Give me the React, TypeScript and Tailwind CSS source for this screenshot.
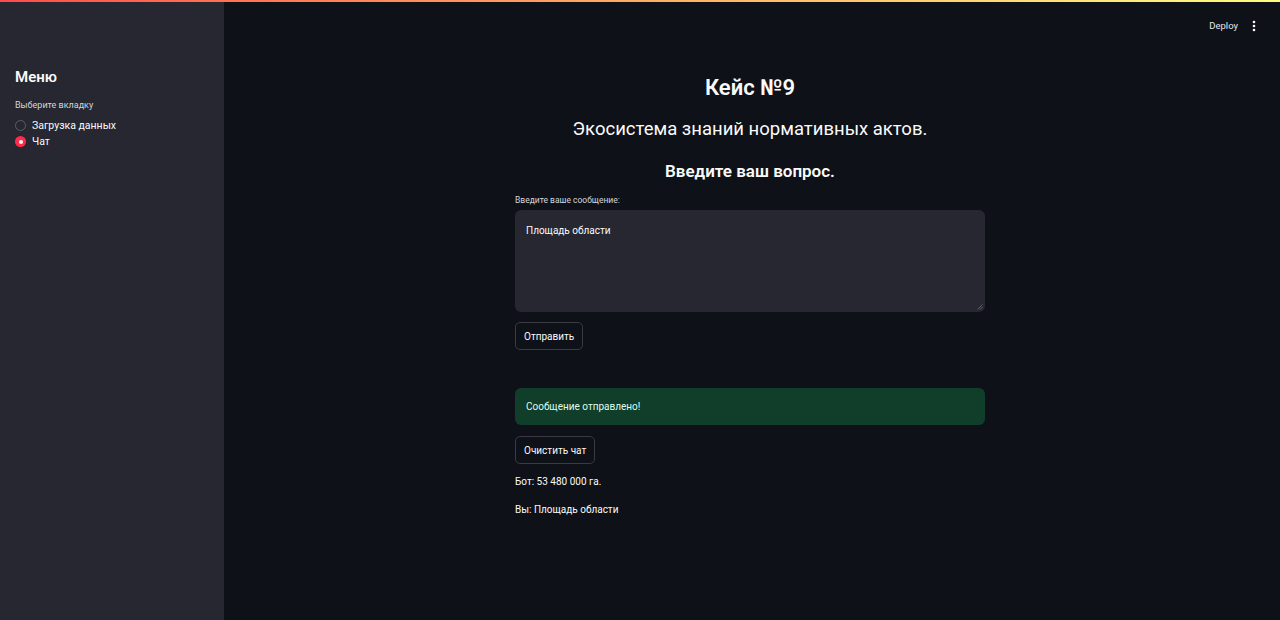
import React from "react";

const font = { fontFamily: 'Roboto, "Noto Sans", sans-serif' };

function Radio({ label, checked }: { label: string; checked?: boolean }) {
  return (
    <div className="flex items-center gap-[6px] h-[16px]">
      {checked ? (
        <span className="w-[11px] h-[11px] rounded-full bg-[#ff2b4b] flex items-center justify-center">
          <span className="w-[4px] h-[4px] rounded-full bg-white" />
        </span>
      ) : (
        <span className="w-[11px] h-[11px] rounded-full border border-[#5c5e66]" />
      )}
      <span className="text-[10.5px] text-[#fafafa]">{label}</span>
    </div>
  );
}

function Button({ children }: { children: React.ReactNode }) {
  return (
    <button className="h-[28px] px-[8px] rounded-[5px] border border-[#3a3b42] bg-[#0e1117] text-[10px] text-[#fafafa]">
      {children}
    </button>
  );
}

export default function App() {
  return (
    <div className="relative w-[1280px] h-[620px] bg-[#0e1117] text-[#fafafa] overflow-hidden flex" style={font}>
      <div className="absolute top-0 left-0 right-0 h-[2px] bg-gradient-to-r from-[#ff4b4b] to-[#fffd80]" />

      <aside className="w-[224px] h-full bg-[#262730] px-[15px] pt-[67px] shrink-0">
        <h2 className="text-[15px] font-semibold leading-[20px]">Меню</h2>
        <div className="mt-[12px] text-[9px] text-[#d5d6da]">Выберите вкладку</div>
        <div className="mt-[5px] flex flex-col">
          <Radio label="Загрузка данных" />
          <Radio label="Чат" checked />
        </div>
      </aside>

      <main className="flex-1 relative pr-[4px]">
        <div className="absolute top-[19px] right-[24px] flex items-center gap-[14px]">
          <span className="text-[9.5px] text-[#e6e6e9]">Deploy</span>
          <svg width="4" height="12" viewBox="0 0 4 12" fill="#fafafa">
            <circle cx="2" cy="2" r="1.3" />
            <circle cx="2" cy="6" r="1.3" />
            <circle cx="2" cy="10" r="1.3" />
          </svg>
        </div>

        <div className="w-[470px] mx-auto pt-[73px]">
          <h1 className="text-center text-[22px] font-semibold leading-[30px]">Кейс №9</h1>
          <h2 className="text-center text-[18.5px] mt-[13px] leading-[26px]">Экосистема знаний нормативных актов.</h2>
          <h3 className="text-center text-[17px] font-semibold mt-[17px] leading-[24px]">Введите ваш вопрос.</h3>

          <div className="mt-[11px] text-[8.5px] text-[#d5d6da] leading-[12px]">Введите ваше сообщение:</div>
          <div className="mt-[4px] h-[102px] rounded-[6px] bg-[#262730] px-[11px] pt-[13px] text-[10px] relative">
            Площадь области
            <svg className="absolute right-[2px] bottom-[2px]" width="6" height="6" viewBox="0 0 6 6" stroke="#6b6d75" strokeWidth="0.8">
              <line x1="0.5" y1="5.5" x2="5.5" y2="0.5" />
              <line x1="3" y1="5.5" x2="5.5" y2="3" />
            </svg>
          </div>

          <div className="mt-[10px]">
            <Button>Отправить</Button>
          </div>

          <div className="mt-[38px] h-[37px] rounded-[6px] bg-[#113d2b] px-[11px] flex items-center text-[10px] text-[#dffde9]">
            Сообщение отправлено!
          </div>

          <div className="mt-[11px]">
            <Button>Очистить чат</Button>
          </div>

          <p className="mt-[11px] text-[10px] leading-[14px]">Бот: 53 480 000 га.</p>
          <p className="mt-[14px] text-[10px] leading-[14px]">Вы: Площадь области</p>
        </div>
      </main>
    </div>
  );
}
